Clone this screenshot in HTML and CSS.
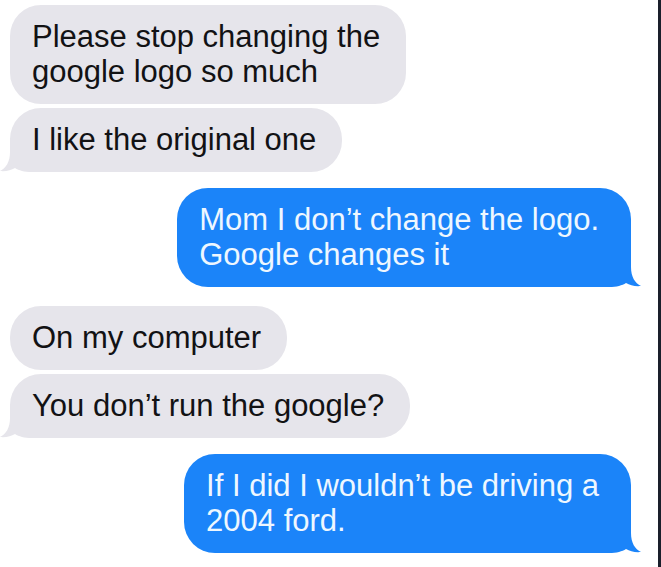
FILE: index.html
```html
<!DOCTYPE html>
<html lang="en">
<head>
<meta charset="utf-8">
<title>Messages</title>
<link rel="stylesheet" href="styles.css">
</head>
<body>
<div class="page">
  <div class="thread">
    <div class="msg recv">Please stop changing the<br>google logo so much</div>
    <div class="msg recv tight">I like the original one<svg class="tail tail-left" viewBox="0 0 48 34" aria-hidden="true"><path d="M48 0 L12 0 L12 14 C12 24 8 30 2 33 C8 33.5 13 32.5 17 30 C21 32.5 26 34 34 34 L48 34 Z"/></svg></div>
    <div class="msg sent">Mom I don’t change the logo.<br>Google changes it<svg class="tail tail-right" viewBox="0 0 48 34" aria-hidden="true"><path d="M0 0 L36 0 L36 14 C36 24 40 30 46 33 C40 33.5 35 32.5 31 30 C27 32.5 22 34 14 34 L0 34 Z"/></svg></div>
    <div class="msg recv gap-big">On my computer</div>
    <div class="msg recv tight">You don’t run the google?<svg class="tail tail-left" viewBox="0 0 48 34" aria-hidden="true"><path d="M48 0 L12 0 L12 14 C12 24 8 30 2 33 C8 33.5 13 32.5 17 30 C21 32.5 26 34 34 34 L48 34 Z"/></svg></div>
    <div class="msg sent">If I did I wouldn’t be driving a<br>2004 ford.<svg class="tail tail-right" viewBox="0 0 48 34" aria-hidden="true"><path d="M0 0 L36 0 L36 14 C36 24 40 30 46 33 C40 33.5 35 32.5 31 30 C27 32.5 22 34 14 34 L0 34 Z"/></svg></div>
  </div>
</div>
</body>
</html>
```

FILE: styles.css
```css
html, body {
  margin: 0;
  padding: 0;
  background: #ffffff;
}

.page {
  box-sizing: border-box;
  width: 661px;
  min-height: 567px;
  border-right: 3px solid #1a1f2b;
  background: #ffffff;
}

.thread {
  display: flex;
  flex-direction: column;
  align-items: flex-start;
  padding: 5px 27px 0 10px;
  font-family: "Liberation Sans", Arial, sans-serif;
  font-size: 31px;
  line-height: 35px;
}

.msg {
  position: relative;
  isolation: isolate;
  padding: 14px 26px 15px 22px;
  border-radius: 31px;
  margin-top: 16px;
  white-space: nowrap;
}

.msg:first-child {
  margin-top: 0;
}

.recv {
  background: #e6e5eb;
  color: #121214;
}

.recv.tight {
  margin-top: 4px;
}

.recv.gap-big {
  margin-top: 19px;
}

.sent {
  align-self: flex-end;
  background: #1b84f9;
  color: #eef7ff;
  padding: 14px 32px 15px 22px;
  margin-top: 16px;
}

.tail {
  position: absolute;
  z-index: -1;
  bottom: 0;
  width: 48px;
  height: 34px;
}

.tail-left {
  left: -12px;
  fill: #e6e5eb;
}

.tail-right {
  right: -12px;
  fill: #1b84f9;
}
```
